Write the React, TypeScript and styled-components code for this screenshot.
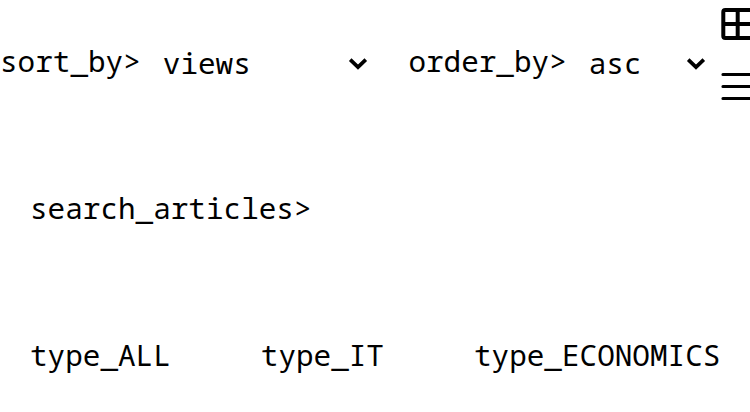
import React from 'react';
import styled, { createGlobalStyle } from 'styled-components';

const Global = createGlobalStyle`
  * { box-sizing: border-box; }
  body {
    margin: 0;
    background: #fff;
    color: #000;
    overflow: hidden;
    font-family: "Noto Sans Mono", "DejaVu Sans Mono", monospace;
    font-size: 29.33px;
    line-height: 40px;
  }
`;

const Page = styled.main`
  width: 750px;
  height: 412px;
  display: flex;
  flex-direction: column;
  overflow: hidden;
`;

const Toolbar = styled.header`
  height: 122px;
  display: flex;
  align-items: center;
`;

const Text = styled.span`
  flex: none;
  white-space: pre;
`;

const Field = styled.div<{ $width: number }>`
  flex: none;
  width: ${p => p.$width}px;
  display: flex;
  align-items: center;
`;

const Select = styled.button<{ $width: number }>`
  flex: none;
  width: ${p => p.$width}px;
  height: 44px;
  margin-left: 22px;
  padding: 4px 0 0;
  border: 0;
  background: none;
  color: inherit;
  font: inherit;
  display: flex;
  align-items: center;
  justify-content: space-between;
`;

const Chevron = styled.svg`
  width: 20px;
  height: 14px;
  flex: none;
  margin-top: 1px;
`;

const ViewModes = styled.div`
  flex: none;
  align-self: flex-start;
  width: 32px;
  padding-top: 8px;
  display: flex;
  flex-direction: column;
  gap: 32px;
`;

const ModeIcon = styled.svg`
  display: block;
  width: 33px;
  height: 32px;
`;

const SearchRow = styled.section`
  height: 172px;
  padding-left: 30px;
  display: flex;
  align-items: center;
`;

const Types = styled.nav`
  padding: 41px 30px 0;
  display: flex;
  gap: 90px;
`;

const Arrow = () => (
  <Chevron viewBox="0 0 20 14">
    <path d="M2.2 2.7 10 10.1 17.8 2.7" fill="none" stroke="#000" strokeWidth="3.7" />
  </Chevron>
);

export default function App() {
  return (
    <Page>
      <Global />
      <Toolbar>
        <Field $width={408.4}>
          <Text>sort_by&gt;</Text>
          <Select $width={205}>
            <Text>views</Text>
            <Arrow />
          </Select>
        </Field>
        <Field $width={312.6}>
          <Text>order_by&gt;</Text>
          <Select $width={117}>
            <Text>asc</Text>
            <Arrow />
          </Select>
        </Field>
        <ViewModes>
          <ModeIcon viewBox="0 0 33 32">
            <rect x="2.3" y="2" width="30" height="28" rx="2" fill="none" stroke="#000" strokeWidth="4" />
            <path d="M16.7 2V30M2 16H32" stroke="#000" strokeWidth="4" />
          </ModeIcon>
          <ModeIcon viewBox="0 0 33 32">
            <path d="M1.9 2.5H34M1.9 14.5H34M1.9 26.5H34" stroke="#000" strokeWidth="3" strokeLinecap="round" />
          </ModeIcon>
        </ViewModes>
      </Toolbar>
      <SearchRow>
        <Text>search_articles&gt;</Text>
      </SearchRow>
      <Types>
        <Text>type_ALL</Text>
        <Text>type_IT</Text>
        <Text>type_ECONOMICS</Text>
      </Types>
    </Page>
  );
}
